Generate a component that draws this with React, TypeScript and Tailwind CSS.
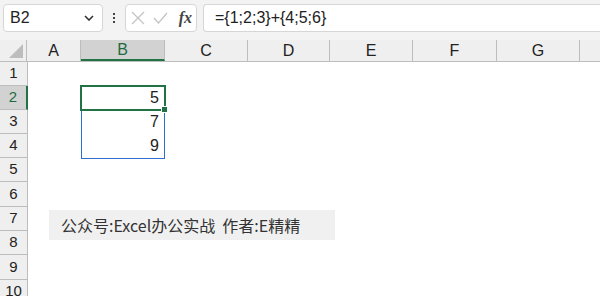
import React from 'react';

const cols = [
  { name: 'A', w: 54 },
  { name: 'B', w: 84 },
  { name: 'C', w: 83 },
  { name: 'D', w: 82 },
  { name: 'E', w: 83 },
  { name: 'F', w: 84 },
  { name: 'G', w: 83 },
  { name: '', w: 60 },
];

const rowHeights = [24, 24, 24, 24, 24, 25, 24, 24, 25, 24];

const values: Record<number, string> = { 2: '5', 3: '7', 4: '9' };

function Chevron() {
  return (
    <svg width="10" height="6" viewBox="0 0 10 6" fill="none" stroke="#333" strokeWidth="1.6">
      <path d="M1 1l4 4 4-4" />
    </svg>
  );
}

export default function App() {
  return (
    <div
      className="relative w-[600px] h-[296px] overflow-hidden bg-white text-[#222]"
      style={{ fontFamily: '"Liberation Sans", "Noto Sans CJK SC", sans-serif' }}
    >
      {/* formula bar */}
      <div className="flex items-center h-[40px] bg-[#f3f3f3] pb-[4px] pl-[3px]">
        <div className="flex items-center justify-between w-[100px] h-[28px] bg-white border border-[#d6d6d6] rounded-[4px] pl-[6px] pr-[8px]">
          <span className="text-[16px]">B2</span>
          <Chevron />
        </div>
        <div className="w-[22px] flex flex-col items-center gap-[2px]">
          <span className="w-[2px] h-[2px] bg-[#444]" />
          <span className="w-[2px] h-[2px] bg-[#444]" />
          <span className="w-[2px] h-[2px] bg-[#444]" />
        </div>
        <div className="flex items-center w-[72px] h-[28px] bg-white border border-[#d6d6d6] rounded-[4px] pl-[5px] pr-[4px] gap-[8px]">
          <svg width="14" height="14" viewBox="0 0 14 14" stroke="#c4c4c4" strokeWidth="1.3" fill="none">
            <path d="M1 1l12 12M13 1L1 13" />
          </svg>
          <svg width="15" height="12" viewBox="0 0 15 12" stroke="#c4c4c4" strokeWidth="1.3" fill="none">
            <path d="M1 6l4.5 5L14 1" />
          </svg>
          <span
            className="ml-auto text-[16px] italic font-bold text-[#444] leading-none"
            style={{ fontFamily: '"Liberation Serif", serif' }}
          >
            fx
          </span>
        </div>
        <div className="ml-[6px] flex-1 flex items-center h-[28px] bg-white border border-[#d6d6d6] border-r-0 rounded-l-[4px] pl-[11px]">
          <span className="text-[16px]">={'{'}1;2;3{'}'}+{'{'}4;5;6{'}'}</span>
        </div>
      </div>

      {/* column headers */}
      <div className="flex h-[22px] bg-[#efefef] border-b border-[#bdbdbd]">
        <div className="w-[27px] shrink-0 border-r border-[#bdbdbd] relative">
          <svg className="absolute right-[3px] bottom-[3px]" width="14" height="14" viewBox="0 0 14 14">
            <path d="M14 0V14H0Z" fill="#bdbdbd" />
          </svg>
        </div>
        {cols.map(c => (
          <div
            key={c.name || 'x'}
            style={{ width: c.w }}
            className={`shrink-0 flex items-center justify-center text-[16px] border-r border-[#bdbdbd] ${
              c.name === 'B' ? 'bg-[#d2d2d2] text-[#1e6b3f] border-b-2 border-b-[#217346]' : ''
            }`}
          >
            {c.name}
          </div>
        ))}
      </div>

      {/* rows */}
      {rowHeights.map((h, i) => {
        const r = i + 1;
        return (
          <div key={r} className="flex" style={{ height: h }}>
            <div
              className={`w-[28px] shrink-0 flex items-center justify-center text-[15px] border-b border-[#bdbdbd] ${
                r === 2
                  ? 'bg-[#d2d2d2] text-[#1e6b3f] border-r-2 border-r-[#217346]'
                  : 'bg-[#efefef] border-r border-r-[#bdbdbd]'
              }`}
            >
              {r}
            </div>
            <div className="w-[53px] shrink-0" />
            <div className="w-[84px] shrink-0 flex items-center justify-end pr-[6px] text-[16px]">
              {values[r]}
            </div>
          </div>
        );
      })}

      {/* selected range B2:B4 */}
      <div className="absolute left-[81px] top-[86px] w-[84px] h-[73px] border border-[#2f6dd0]" />
      {/* active cell */}
      <div className="absolute left-[80px] top-[85px] w-[86px] h-[26px] border-2 border-[#217346]" />
      <div className="absolute left-[162px] top-[107px] w-[5px] h-[5px] bg-[#217346] outline outline-1 outline-white" />

      {/* text box */}
      <div
        className="absolute left-[49px] top-[210px] w-[286px] h-[30px] bg-[#f0f0f0] flex items-center pl-[12px] text-[16px] text-[#333]"
        style={{ fontFamily: '"Noto Sans CJK SC", sans-serif' }}
      >
        公众号:Excel办公实战&nbsp;&nbsp;作者:E精精
      </div>
    </div>
  );
}
